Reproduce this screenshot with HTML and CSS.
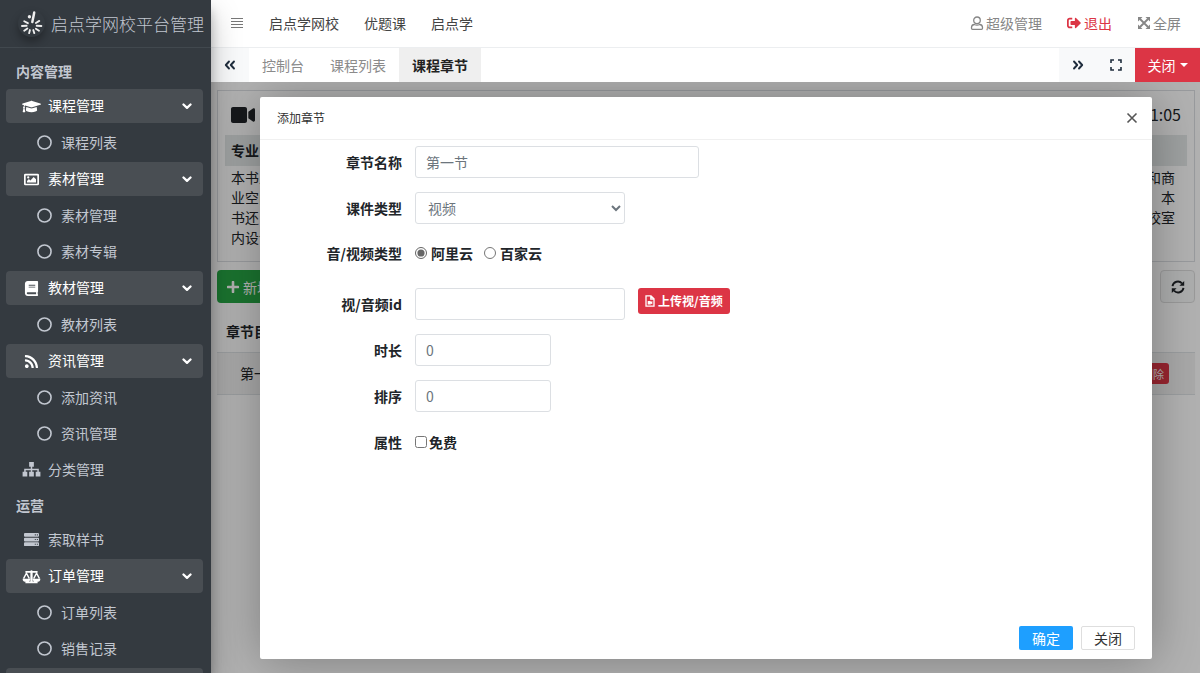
FILE: index.html
```html
<!DOCTYPE html>
<html lang="zh-CN">
<head>
<meta charset="utf-8">
<title>启点学网校平台管理</title>
<link rel="stylesheet" href="styles.css">
</head>
<body>
<svg class="defs" aria-hidden="true">
  <symbol id="down" viewBox="0 0 10 7"><path d="M1.500 1.500 5 4.800l3.500-3.300" fill="none" stroke="currentColor" stroke-width="2.300" stroke-linecap="round" stroke-linejoin="round"/></symbol>
  <symbol id="ring" viewBox="0 0 16 16"><circle cx="8" cy="8" r="7" fill="none" stroke="currentColor" stroke-width="1.700"/></symbol>
  <symbol id="dbl" viewBox="0 0 12 10"><path d="M5 1.500 1.800 5 5 8.500M10 1.500 6.800 5l3.200 3.500" fill="none" stroke="currentColor" stroke-width="1.900" stroke-linecap="round" stroke-linejoin="round"/></symbol>
</svg>
<div class="app">
  <aside class="sidebar">
    <a class="brand" href="#">
      <svg class="logo" viewBox="0 0 26 26" aria-hidden="true">
        <g fill="none" stroke="#eee" stroke-linecap="round" stroke-width="1.800">
          <path d="M13.800 11.500C14.500 8 15.200 5 15.600 2.500" stroke-width="2.400"/><path d="m17.200 12.500 3.300-2M18 15.200l4.500.2M17.200 18l3 2M14.700 19.300l1 3M11.500 19.300l-.8 3M9 17.800 6 20M8.300 15.200 3.800 15.400M9.500 12.700l-3.500-1.900"/>
        </g>
        <circle cx="11" cy="6.500" r="1.600" fill="#eee"/>
      </svg>
      <span>启点学网校平台管理</span>
    </a>
    <nav>
      <ul class="menu">
        <li class="menu-head">内容管理</li>
        <li><button class="item parent"><svg viewBox="0 0 640 512"><path d="M622.340 153.200L343.400 67.500c-15.200-4.670-31.600-4.670-46.790 0L17.660 153.200c-23.540 7.230-23.540 38.360 0 45.590l48.630 14.940c-10.670 13.190-17.230 29.280-17.880 46.900C38.780 266.150 32 276.110 32 288c0 10.780 5.680 19.850 13.860 25.650L20.330 428.530C18.110 438.520 25.710 448 35.940 448h56.110c10.240 0 17.840-9.480 15.620-19.470L82.140 313.650C90.320 307.850 96 298.780 96 288c0-11.570-6.470-21.250-15.660-26.870.76-15.020 8.440-28.300 20.690-36.720L296.600 284.500c9.060 2.780 26.440 6.250 46.790 0l278.950-85.700c23.550-7.240 23.550-38.360 0-45.600zM352.790 315.090c-28.530 8.760-52.840 3.920-65.590 0l-145.020-44.550L128 384c0 35.350 85.960 64 192 64s192-28.650 192-64l-14.180-113.470-145.030 44.560z"/></svg><span>课程管理</span><svg class="caret"><use href="#down"/></svg></button></li>
        <li><a class="item child" href="#"><svg><use href="#ring"/></svg><span>课程列表</span></a></li>
        <li><button class="item parent"><svg viewBox="0 0 19 16"><path fill-rule="evenodd" d="M3 1.800h13A1.500 1.500 0 0 1 17.500 3.300v9.400a1.500 1.500 0 0 1-1.500 1.500H3A1.500 1.500 0 0 1 1.500 12.700V3.300A1.500 1.500 0 0 1 3 1.800zm.3 1.800v8.800h12.400V3.600zM4.700 11.200V9.500l2-2L8.300 9 11.800 5.300l2.500 2.500v3.400zM6 4.600a1.200 1.200 0 1 1 0 2.400 1.200 1.200 0 0 1 0-2.400z"/></svg><span>素材管理</span><svg class="caret"><use href="#down"/></svg></button></li>
        <li><a class="item child" href="#"><svg><use href="#ring"/></svg><span>素材管理</span></a></li>
        <li><a class="item child" href="#"><svg><use href="#ring"/></svg><span>素材专辑</span></a></li>
        <li><button class="item parent"><svg viewBox="0 0 448 512"><path d="M448 360V24c0-13.300-10.700-24-24-24H96C43 0 0 43 0 96v320c0 53 43 96 96 96h328c13.300 0 24-10.700 24-24v-16c0-7.500-3.500-14.300-8.900-18.700-4.200-15.400-4.200-59.300 0-74.700 5.400-4.300 8.900-11.100 8.900-18.600zM128 134c0-3.300 2.700-6 6-6h212c3.300 0 6 2.700 6 6v20c0 3.300-2.700 6-6 6H134c-3.300 0-6-2.700-6-6v-20zm0 64c0-3.300 2.700-6 6-6h212c3.300 0 6 2.700 6 6v20c0 3.300-2.700 6-6 6H134c-3.300 0-6-2.700-6-6v-20zm253.400 250H96c-17.700 0-32-14.300-32-32 0-17.600 14.400-32 32-32h285.400c-1.900 17.100-1.900 46.900 0 64z"/></svg><span>教材管理</span><svg class="caret"><use href="#down"/></svg></button></li>
        <li><a class="item child" href="#"><svg><use href="#ring"/></svg><span>教材列表</span></a></li>
        <li><button class="item parent"><svg viewBox="0 0 448 512"><path d="M128.081 415.959c0 35.369-28.672 64.041-64.041 64.041S0 451.328 0 415.959s28.672-64.041 64.041-64.041 64.040 28.673 64.040 64.041zm175.660 47.250c-8.354-154.600-132.185-278.587-286.950-286.950C7.656 175.765 0 183.105 0 192.253v48.069c0 8.415 6.490 15.472 14.887 16.018 111.832 7.284 201.473 96.702 208.772 208.772.547 8.397 7.604 14.887 16.018 14.887h48.069c9.149.001 16.489-7.655 15.995-16.790zm144.249.288C439.596 229.677 251.465 40.445 16.503 32.010 7.473 31.686 0 38.981 0 48.016v48.068c0 8.625 6.835 15.645 15.453 15.999 191.179 7.839 344.627 161.316 352.465 352.465.353 8.618 7.373 15.453 15.999 15.453h48.068c9.034-.001 16.329-7.474 16.005-16.504z"/></svg><span>资讯管理</span><svg class="caret"><use href="#down"/></svg></button></li>
        <li><a class="item child" href="#"><svg><use href="#ring"/></svg><span>添加资讯</span></a></li>
        <li><a class="item child" href="#"><svg><use href="#ring"/></svg><span>资讯管理</span></a></li>
        <li><a class="item" href="#"><svg viewBox="0 0 19 16"><path d="M7 0h5v5H7zM0 10.500h5v5H0zM7 10.500h5v5H7zM14 10.500h5v5h-5zM8.700 5h1.600v2.200h7V10.500h-1.600V8.700h-5.400v1.800H8.700V8.700H3.300v1.800H1.700V7.200h7z"/></svg><span>分类管理</span></a></li>
        <li class="menu-head">运营</li>
        <li><a class="item" href="#"><svg viewBox="0 0 19 16"><path fill-rule="evenodd" d="M2.500 1h14q1 0 1 1v2.300q0 .7-1 .7h-14q-1 0-1-.7V2q0-1 1-1zm0 5h14q1 0 1 1v2q0 1-1 1h-14q-1 0-1-1V7q0-1 1-1zm0 5h14q1 0 1 1v2q0 1-1 1h-14q-1 0-1-1v-2q0-1 1-1zM13 2.500v1.100h1.100V2.500zm2.200 0v1.100h1.100V2.500zM13 7.500v1.100h1.100V7.500zm2.200 0v1.100h1.100V7.500zM13 12.500v1.100h1.100v-1.100zm2.200 0v1.100h1.100v-1.100z"/></svg><span>索取样书</span></a></li>
        <li><button class="item parent"><svg viewBox="0 0 19 16"><path d="M8.200 2.200A1.400 1.400 0 0 1 10.800 2.200H16v1.900h-5.300v9.200H16v2H3v-2h5.300V4.100H3V2.200zM0 10.300h8.200a4.100 3.500 0 0 1-8.200 0zM10.800 10.300H19a4.100 3.500 0 0 1-8.200 0z"/><path d="m1 10.300 3.100-5.800 3.100 5.800M11.800 10.300l3.100-5.800 3.100 5.800" fill="none" stroke="currentColor" stroke-width="1.500"/></svg><span>订单管理</span><svg class="caret"><use href="#down"/></svg></button></li>
        <li><a class="item child" href="#"><svg><use href="#ring"/></svg><span>订单列表</span></a></li>
        <li><a class="item child" href="#"><svg><use href="#ring"/></svg><span>销售记录</span></a></li>
        <li><button class="item parent" aria-label="更多"></button></li>
      </ul>
    </nav>
  </aside>

  <div class="main">
    <header class="topbar">
      <button class="bars" aria-label="菜单"><svg viewBox="0 0 14 12"><path d="M1 1.500h12M1 4.500h12M1 7.500h12M1 10.500h12" stroke="currentColor" stroke-width="1.200"/></svg></button>
      <nav class="links"><a href="#">启点学网校</a><a href="#">优题课</a><a href="#">启点学</a></nav>
      <nav class="user">
        <a href="#"><svg viewBox="0 0 14 14" fill="none" stroke="currentColor" stroke-width="1.300"><circle cx="7" cy="4.300" r="3.300"/><path d="M4.300 8.500C2.500 8.600 1.500 10 1.500 11.500v.8q0 1 1 1h9q1 0 1-1v-.8c0-1.500-1-2.900-2.800-3q-2.700 1.200-5.400 0z"/></svg>超级管理</a>
        <a class="logout" href="#"><svg viewBox="0 0 512 512"><path fill="currentColor" d="M497 273L329 441c-15 15-41 4.500-41-17v-96H152c-13.300 0-24-10.700-24-24v-96c0-13.300 10.700-24 24-24h136V88c0-21.400 25.900-32 41-17l168 168c9.300 9.400 9.300 24.600 0 34zM192 436v-40c0-6.600-5.400-12-12-12H96c-17.700 0-32-14.300-32-32V160c0-17.700 14.300-32 32-32h84c6.600 0 12-5.400 12-12V76c0-6.600-5.400-12-12-12H96c-53 0-96 43-96 96v192c0 53 43 96 96 96h84c6.600 0 12-5.400 12-12z"/></svg>退出</a>
        <a href="#"><svg viewBox="0 0 14 14"><path d="m3 3 8 8M11 3l-8 8" stroke="currentColor" stroke-width="1.900"/><path fill="currentColor" d="M1 1h4.500L1 5.500zM13 1v4.500L8.500 1zM1 13V8.500L5.500 13zM13 13H8.500L13 8.500z"/></svg>全屏</a>
      </nav>
    </header>
    <div class="tabbar">
      <button class="tool" aria-label="向左"><svg><use href="#dbl"/></svg></button>
      <nav class="tabs"><a href="#">控制台</a><a href="#">课程列表</a><a class="active" href="#">课程章节</a></nav>
      <button class="tool" aria-label="向右"><svg class="flip"><use href="#dbl"/></svg></button>
      <button class="tool" aria-label="全屏"><svg viewBox="0 0 12 12"><path d="M1 4V1h3M8 1h3v3M11 8v3H8M4 11H1V8" fill="none" stroke="currentColor" stroke-width="1.600"/></svg></button>
      <button class="close-tabs">关闭<i class="tri"></i></button>
    </div>

    <div class="frame">
      <section class="page">
        <div class="card">
          <div class="card-top"><svg viewBox="0 0 576 512"><path fill="currentColor" d="M336.200 64H47.800C21.400 64 0 85.400 0 111.800v288.400C0 426.600 21.400 448 47.800 448h288.400c26.400 0 47.800-21.400 47.800-47.800V111.800c0-26.400-21.400-47.800-47.800-47.800zm189.400 37.700L416 177.300v157.400l109.600 75.500c21.200 14.600 50.400-.3 50.400-25.800V127.500c0-25.400-29.100-40.400-50.400-25.800z"/></svg><time>01:05</time></div>
          <h2 class="band">专业</h2>
          <div class="desc">
            <p><span>本书从</span><span>和商</span></p>
            <p><span>业空间</span><span>本</span></p>
            <p><span>书还</span><span>校室</span></p>
            <p><span>内设计</span></p>
          </div>
        </div>
        <div class="actions">
          <button class="add"><svg viewBox="0 0 12 12"><path d="M6 1v10M1 6h10" stroke="currentColor" stroke-width="2.600" stroke-linecap="round"/></svg>新增</button>
          <button class="refresh" aria-label="刷新"><svg viewBox="0 0 14 14"><path d="M1.500 6.200A5.500 5.500 0 0 1 11 3.300M12.500 7.800A5.500 5.500 0 0 1 3 10.700" fill="none" stroke="currentColor" stroke-width="1.900"/><path fill="currentColor" d="M13.200 1v4.800H8.400zM.8 13V8.200h4.800z"/></svg></button>
        </div>
        <table class="list">
          <thead><tr><th>章节目录</th><th></th></tr></thead>
          <tbody><tr><td>第一节</td><td class="ops"><button class="del">删除</button></td></tr></tbody>
        </table>
      </section>

      <div class="shade">
        <div class="dialog" role="dialog" aria-labelledby="dlg-title">
          <div class="dlg-head"><h1 id="dlg-title">添加章节</h1><button aria-label="关闭"><svg viewBox="0 0 12 12"><path d="m1.500 1.500 9 9M10.500 1.500l-9 9" stroke="currentColor" stroke-width="1.600"/></svg></button></div>
          <form class="form">
            <div class="row"><label class="lab" for="name">章节名称</label><input class="field wide" id="name" type="text" value="第一节"></div>
            <div class="row"><label class="lab" for="kind">课件类型</label><select class="field mid" id="kind"><option>视频</option></select></div>
            <div class="row tall"><span class="lab">音/视频类型</span><label class="opt"><input type="radio" name="src" checked>阿里云</label><label class="opt"><input type="radio" name="src">百家云</label></div>
            <div class="row"><label class="lab" for="vid">视/音频id</label><input class="field mid" id="vid" type="text"><button class="upload" type="button"><svg viewBox="0 0 10 12"><path d="M1 .8h5L9 3.800v7.400H1zM5.800.8v3.200H9" fill="none" stroke="currentColor" stroke-width="1.300"/><path d="M2.700 6h3v1l1.600-.9v3.200L5.700 8.400v1h-3z" fill="currentColor"/></svg>上传视/音频</button></div>
            <div class="row"><label class="lab" for="dur">时长</label><input class="field short" id="dur" type="text" value="0"></div>
            <div class="row"><label class="lab" for="ord">排序</label><input class="field short" id="ord" type="text" value="0"></div>
            <div class="row"><span class="lab">属性</span><label class="opt tight"><input type="checkbox">免费</label></div>
          </form>
          <div class="dlg-foot"><button class="ok">确定</button><button class="cancel">关闭</button></div>
        </div>
      </div>
    </div>
  </div>
</div>
</body>
</html>
```

FILE: styles.css
```css
* { box-sizing: border-box; }
body { margin: 0; font-family: "Noto Sans CJK SC", "Noto Sans", sans-serif; font-size: 14px; line-height: 20px; color: #212529; background: #fff; }
button, input, select { font: inherit; color: inherit; margin: 0; }
button { border: 0; padding: 0; background: none; cursor: pointer; }
a { color: inherit; text-decoration: none; }
h1, h2, p, ul { margin: 0; padding: 0; }
svg { flex: none; display: block; }
.defs { position: absolute; width: 0; height: 0; }

.app { display: flex; height: 100vh; overflow: hidden; }

/* sidebar */
.sidebar { flex: none; width: 211px; overflow: hidden; background: #343a40; color: #c2c7d0; position: relative; z-index: 2; box-shadow: 0 14px 28px rgba(0,0,0,.25), 0 10px 10px rgba(0,0,0,.22); }
.brand { display: flex; align-items: center; gap: 6px; height: 48px; padding-left: 18px; border-bottom: 1px solid #41484e; font-size: 17px; font-weight: 300; white-space: nowrap; }
.logo { width: 27px; height: 27px; border-radius: 50%; box-shadow: 0 5px 8px rgba(0,0,0,.3); }
.menu { list-style: none; display: flex; flex-direction: column; gap: 3px; padding: 7px 8px 0 6px; }
.menu-head { height: 31px; padding: 6px 10px 0; font-weight: 700; }
.item { display: flex; align-items: center; gap: 7px; width: 100%; height: 33px; padding: 0 11px 0 16px; border-radius: 4px; text-align: left; }
.item svg { width: 19px; height: 15px; fill: currentColor; }
.item span { flex: 1; padding-bottom: 2px; }
.parent { height: 34px; background: #494e53; color: #fff; }
.item .caret { width: 10px; height: 7px; }
.child { padding-left: 29px; }

/* top bar */
.main { flex: 1; min-width: 0; display: flex; flex-direction: column; }
.topbar { flex: none; display: flex; align-items: center; height: 48px; padding: 0 19px 1px; border-bottom: 1px solid #eceef0; }
.bars { color: #777; }
.bars svg { width: 14px; height: 12px; }
.links { display: flex; gap: 25px; margin-left: 25px; flex: 1; color: #444; }
.user { display: flex; gap: 25px; color: #868686; }
.user a { display: flex; align-items: center; gap: 2px; }
.user svg { width: 14px; height: 14px; }
.user .logout { color: #dc3545; gap: 3px; }

.tabbar { flex: none; display: flex; height: 34px; }
.tool { display: grid; place-items: center; width: 38px; background: #f8f9fa; color: #1f2d3d; }
.tool svg { width: 12px; height: 12px; }
.tool .flip { transform: scaleX(-1); }
.tabs { flex: 1; display: flex; color: #8b8b8b; }
.tabs a { padding: 7px 13px; }
.tabs .active { background: #efefef; color: #222; font-weight: 700; }
.close-tabs { display: flex; align-items: center; justify-content: center; gap: 4px; width: 65px; background: #dc3545; color: #fff; }
.tri { border: 4px solid transparent; border-top-color: currentColor; border-bottom: 0; }

/* page under the dialog */
.frame { flex: 1; min-height: 0; position: relative; overflow: hidden; }
.page { padding: 8px 5px 0 6px; }
.card { min-height: 172px; padding: 10px 7px; border: 1px solid #dcdfe2; }
.card-top { display: flex; align-items: center; justify-content: space-between; height: 28px; padding: 0 6px; font-size: 16px; }
.card-top time { padding-bottom: 2px; }
.card-top svg { width: 24px; height: 22px; }
.band { height: 31px; margin-top: 6px; padding: 5px 6px; background: #e4e9e9; font-size: 14px; }
.desc { padding: 1px 12px 0 6px; }
.desc p { display: flex; justify-content: space-between; }
.actions { display: flex; justify-content: space-between; margin-top: 8px; }
.add { display: flex; align-items: center; gap: 4px; height: 33px; padding: 0 10px; border-radius: 4px; background: #28a745; color: #fff; }
.add svg { width: 12px; height: 12px; }
.refresh { display: grid; place-items: center; width: 35px; height: 33px; border: 1px solid #ddd; border-radius: 4px; background: #f8f9fa; }
.refresh svg { width: 14px; height: 14px; }
.list { width: 100%; margin-top: 8px; border-collapse: collapse; }
.list th { height: 41px; padding: 0 9px; text-align: left; }
.list td { height: 42px; padding: 0 23px; background: #f2f2f2; border: solid #dee2e6; border-width: 1px 0; }
.list .ops { padding-right: 26px; text-align: right; }
.del { height: 21px; padding: 0 5px; border-radius: 3px; background: #dc3545; color: #fff; font-size: 11px; line-height: 20px; vertical-align: middle; }

/* dialog */
.shade { position: absolute; inset: 0; display: flex; padding: 15px 48px 14px 49px; background: rgba(0,0,0,.3); }
.dialog { flex: 1; display: flex; flex-direction: column; background: #fff; border-radius: 2px; box-shadow: 1px 1px 50px rgba(0,0,0,.3); }
.dlg-head { display: flex; align-items: center; justify-content: space-between; height: 43px; padding: 0 14px 0 17px; border-bottom: 1px solid #f0f0f0; color: #333; }
.dlg-head h1 { font-size: 12px; font-weight: 400; }
.dlg-head svg { width: 12px; height: 12px; color: #555; }
.form { flex: 1; display: flex; flex-direction: column; gap: 14px; padding-top: 6px; }
.row { display: flex; align-items: center; min-height: 32px; }
.tall { min-height: 36px; padding-bottom: 6px; }
.lab { width: 142px; margin-right: 13px; text-align: right; font-weight: 700; }
.field { height: 32px; padding: 0 10px; border: 1px solid #dcdfe3; border-radius: 3px; background: #fff; color: #6c757d; }
select.field { padding: 0 4px 0 8px; }
.wide { width: 284px; }
.mid { width: 210px; }
.short { width: 136px; }
.opt { display: flex; align-items: center; gap: 4px; margin-right: 11px; font-weight: 700; }
.opt input { width: 12px; height: 12px; accent-color: #666; }
.tight { gap: 2px; }
.upload { display: flex; align-items: center; gap: 3px; height: 26px; margin-left: 13px; padding: 0 7px; border-radius: 3px; align-self: flex-start; background: #dc3545; color: #fff; font-size: 12px; font-weight: 700; }
.upload svg { width: 10px; height: 12px; }
.dlg-foot { display: flex; justify-content: flex-end; gap: 8px; padding: 0 17px 9px; }
.dlg-foot button { width: 54px; height: 24px; border-radius: 2px; }
.dlg-foot .ok { background: #1e9fff; color: #fff; }
.dlg-foot .cancel { border: 1px solid #dedede; color: #333; }
```
